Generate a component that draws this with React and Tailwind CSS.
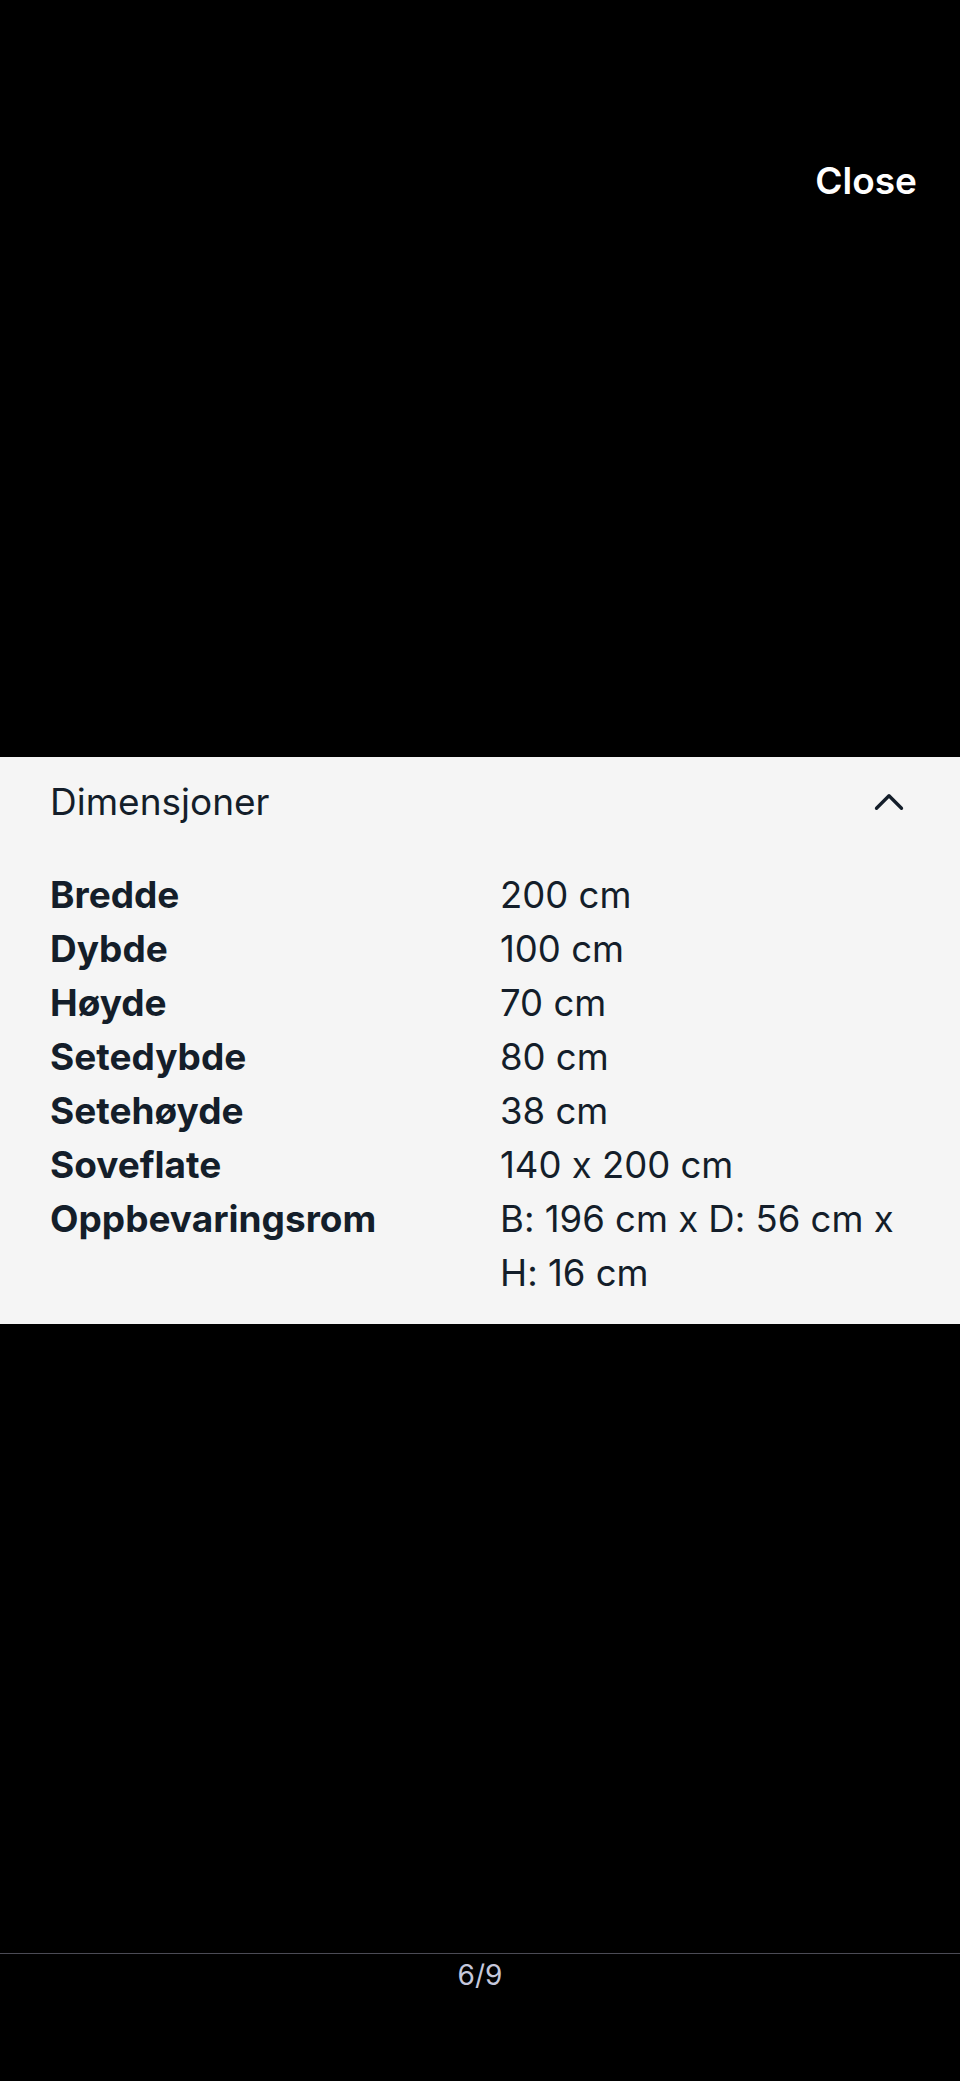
import { ChevronUp } from 'lucide-react'

const dims = [
  ['Bredde', '200 cm'],
  ['Dybde', '100 cm'],
  ['Høyde', '70 cm'],
  ['Setedybde', '80 cm'],
  ['Setehøyde', '38 cm'],
  ['Soveflate', '140 x 200 cm'],
  ['Oppbevaringsrom', 'B: 196 cm x D: 56 cm x H: 16 cm'],
]

export default function App() {
  return (
    <div className="flex flex-col h-[2081px] w-full bg-black font-['Inter',sans-serif] [font-feature-settings:'calt'_0]">
      {/* Top bar */}
      <div className="h-[757px] flex justify-end pt-[159px] pr-[43px]">
        <button className="text-white text-[37px] leading-[1.2] font-semibold h-fit">Close</button>
      </div>

      {/* Dimensions panel */}
      <div className="bg-[#f5f5f5] text-[#141e2a] px-[50px] pt-[20px] pb-[24px]">
        <div className="flex items-center justify-between">
          <h2 className="text-[37px] leading-[1.2] font-normal">Dimensjoner</h2>
          <ChevronUp size={50} strokeWidth={1.6} className="mr-[-4px] text-[#141e2a]" />
        </div>

        <div className="grid grid-cols-[450px_1fr] mt-[41px] leading-[54px]">
          {dims.map(([label, value]) => (
            <div key={label} className="contents">
              <div className="font-bold text-[37px]">{label}</div>
              <div className="text-[36.5px]">{value}</div>
            </div>
          ))}
        </div>
      </div>

      <div className="flex-1" />

      {/* Pager */}
      <div className="border-t border-[#4b4b55] h-[128px] pt-[5px] text-center">
        <span className="text-[28px] leading-[1.2] text-[#c5c8dc]">6/9</span>
      </div>
    </div>
  )
}
